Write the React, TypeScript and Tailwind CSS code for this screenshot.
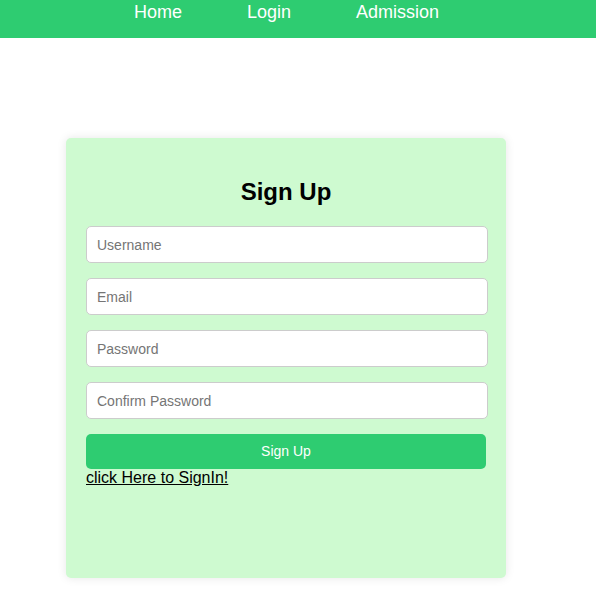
import React from 'react'

function Navbar() {
  const links = ['Home', 'Login', 'Admission']
  return (
    <div className='h-[38px] bg-[#2ecc71]'>
      <ul className='flex gap-[65px] pl-[134px] text-[18px] leading-[25px] text-white'>
        {links.map((item) => (
          <li key={item} className='cursor-pointer'>{item}</li>
        ))}
      </ul>
    </div>
  )
}

function SignUp() {
  const fields = [
    { name: 'username', label: 'Username', type: 'text' },
    { name: 'email', label: 'Email', type: 'email' },
    { name: 'password', label: 'Password', type: 'password' },
    { name: 'confirm', label: 'Confirm Password', type: 'password' },
  ]
  return (
    <div className='mt-[100px] ml-[66px] w-[440px] h-[440px] rounded-[5px] bg-[#cefad0] p-5 shadow-[0_0_10px_rgba(0,0,0,0.1)]'>
      <h2 className='mt-5 mb-5 text-center text-[24px] leading-[28px] font-bold text-black'>Sign Up</h2>
      <form className='flex flex-col'>
        {fields.map((f) => (
          <input
            key={f.name}
            type={f.type}
            placeholder={f.label}
            className='mb-[15px] h-[37px] w-[402px] rounded-[5px] border border-[#ccc] bg-white px-[10px] text-[14px] placeholder:text-[#757575] outline-none'
          />
        ))}
        <button
          type='button'
          className='h-[35px] w-[400px] rounded-[5px] bg-[#2ecc71] text-[14px] font-normal text-white'
        >
          Sign Up
        </button>
      </form>
      <a href='#' className='block text-[16px] leading-[17px] text-black underline'>click Here to SignIn!</a>
    </div>
  )
}

export default function App() {
  return (
    <div className='min-h-[596px] bg-white' style={{ fontFamily: '"Liberation Sans", Arial, sans-serif' }}>
      <Navbar />
      <SignUp />
    </div>
  )
}
